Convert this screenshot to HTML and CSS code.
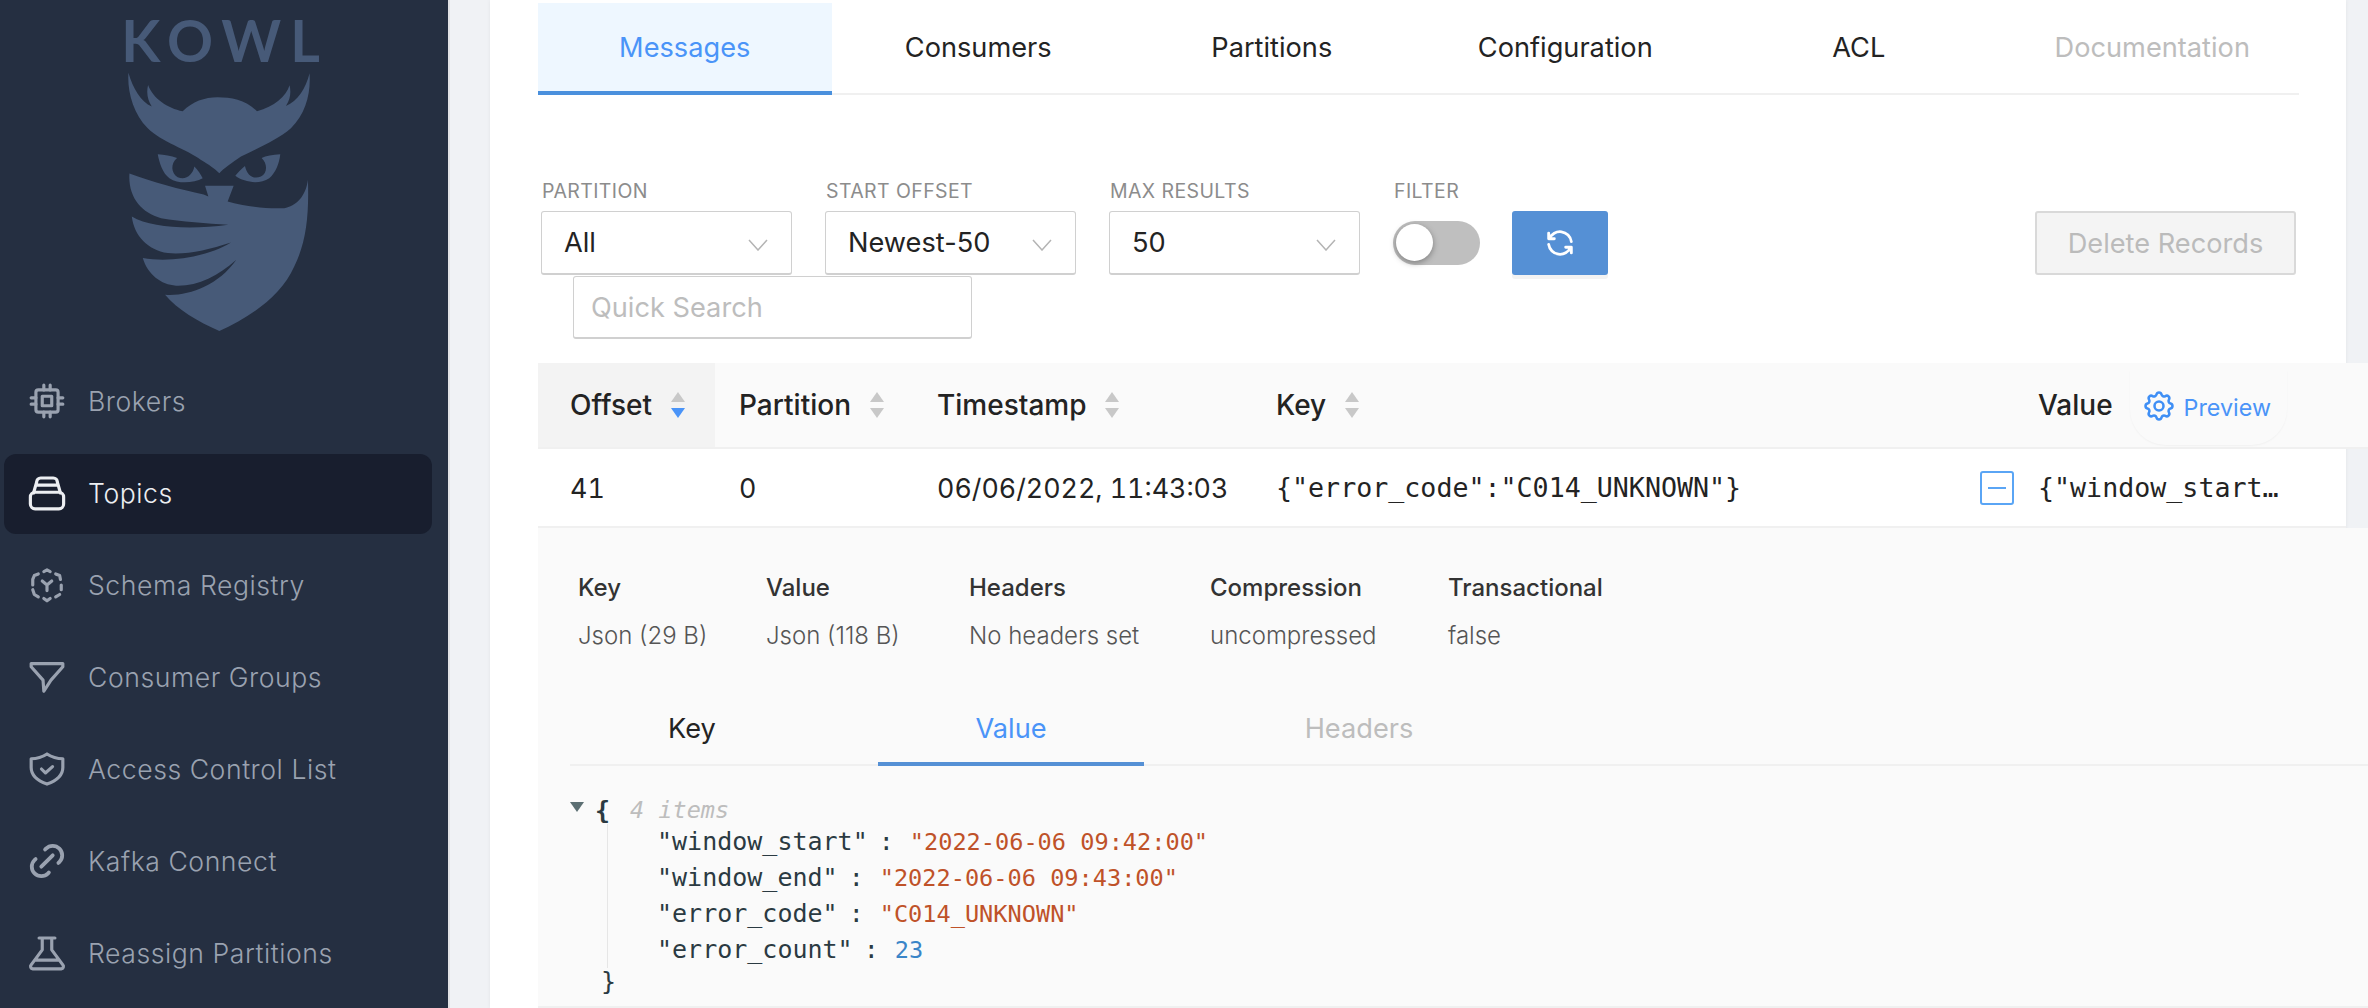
FILE: index.html
```html
<!DOCTYPE html>
<html>
  <head>
    <meta charset="utf-8">
    <title>Kowl</title>
    <link rel="stylesheet" href="styles.css">
  </head>
  <body>
    <aside class="sidebar">
      <div class="logo">
        <span class="logoText">KOWL</span>
        <svg class="logoOwl" viewBox="360 210 600 790">
          <path d="M382 218C378 270 395 340 440 385C480 425 560 450 600 480C625 495 640 505 655 520C670 505 690 490 720 470C770 445 830 420 870 385C915 340 930 280 926 220C915 265 890 305 855 318C870 295 870 275 866 256C855 290 820 320 768 334C735 300 690 292 650 292C610 292 575 305 545 334C500 325 455 295 441 255C435 280 440 300 452 320C420 305 395 265 382 218Z"/>
          <path d="M470 463C490 464 510 468 528 474C508 490 510 520 530 532C555 542 575 525 580 500C590 510 600 525 605 535C580 548 535 555 505 535C485 520 475 490 470 463Z"/>
          <path d="M838 463C815 464 795 468 782 474C800 490 800 520 780 530C755 540 738 525 732 498C720 508 710 518 703 528C730 548 775 555 805 535C825 518 835 490 838 463Z"/>
          <path d="M385 521C450 545 540 570 608 584L622 590L612 558L698 558L680 605C730 620 800 628 850 625C885 620 915 590 921 540C925 650 915 730 880 800C840 890 750 950 655 994C590 965 530 930 492 885C560 890 650 860 706 780C650 830 590 860 525 858C480 855 440 825 425 775C510 790 620 770 690 728C620 750 560 765 500 760C440 750 400 710 392 650C450 685 570 690 682 675C620 670 540 665 480 655C420 640 380 590 385 521Z"/>
        </svg>
      </div>
      <nav class="menu">
        <a class="menuItem">
          <svg class="menuIcon" viewBox="0 0 24 24"><rect x="5" y="5" width="14" height="14" rx="1.5"/><rect x="9" y="9" width="6" height="6"/><path d="M2 10H5M2 14H5M10 2V5M14 2V5M22 10H19M22 14H19M14 22V19M10 22V19"/></svg>
          Brokers
        </a>
        <a class="menuItem active">
          <svg class="menuIcon" viewBox="0 0 24 24"><rect x="1.500" y="11.500" width="21" height="10.500" rx="3"/><path d="M3.500 12L5.500 5A2.500 2.500 0 0 1 8 2.500H16A2.500 2.500 0 0 1 18.500 5L20.500 12M5.500 7H18.500"/></svg>
          Topics
        </a>
        <a class="menuItem">
          <svg class="menuIcon" viewBox="0 0 24 24"><path d="M10 3.500L12 2.500L14 3.500M17.500 5L20 6L20.500 8.500M21 12V15M20 18L17.500 19.500M6.500 19.500L4 18L3 15M3 12V8.500L4 6L6.500 5"/><path d="M9 9.500L12 12L15 9.500M12 12V15.500M10 20.500L12 22L14 20.500"/></svg>
          Schema Registry
        </a>
        <a class="menuItem">
          <svg class="menuIcon" viewBox="0 0 24 24"><path d="M2 3.500H22V5.500L14.500 14L10 21L9.500 14L2 5.500Z"/></svg>
          Consumer Groups
        </a>
        <a class="menuItem">
          <svg class="menuIcon" viewBox="0 0 24 24"><path d="M12 2.500C15 4.500 18 5.500 22 5.500V11C22 16 17.500 19.500 12 21.500C6.500 19.500 2 16 2 11V5.500C6 5.500 9 4.500 12 2.500Z"/><path d="M8.500 12L11 14.500L15.500 10.500"/></svg>
          Access Control List
        </a>
        <a class="menuItem">
          <svg class="menuIcon" viewBox="2 2 20 20"><path d="M9 15L15 9"/><path d="M11 6L11.463 5.464A5 5 0 0 1 18.534 12.536L18 13"/><path d="M13 18L12.603 18.534A5.068 5.068 0 0 1 5.476 18.534A4.972 4.972 0 0 1 5.476 11.463L6 11"/></svg>
          Kafka Connect
        </a>
        <a class="menuItem">
          <svg class="menuIcon" viewBox="0 0 24 24"><path d="M7 2.500H17M9 2.500V10L2 19.500A1.500 1.500 0 0 0 3 22H21A1.500 1.500 0 0 0 22 19.500L15 10V2.500M5.500 16.500H18.500"/></svg>
          Reassign Partitions
        </a>
      </nav>
    </aside>

    <main class="content">
      <section class="card">
        <ul class="tabs">
          <li class="tab active">Messages</li>
          <li class="tab">Consumers</li>
          <li class="tab">Partitions</li>
          <li class="tab">Configuration</li>
          <li class="tab">ACL</li>
          <li class="tab disabled">Documentation</li>
        </ul>

        <div class="filters">
          <div class="filter">
            <label class="filterLabel">PARTITION</label>
            <div class="select">All<svg class="chevron" viewBox="0 0 20 12"><path d="M1 1L10 11L19 1"/></svg></div>
          </div>
          <div class="filter">
            <label class="filterLabel">START OFFSET</label>
            <div class="select">Newest-50<svg class="chevron" viewBox="0 0 20 12"><path d="M1 1L10 11L19 1"/></svg></div>
          </div>
          <div class="filter">
            <label class="filterLabel">MAX RESULTS</label>
            <div class="select">50<svg class="chevron" viewBox="0 0 20 12"><path d="M1 1L10 11L19 1"/></svg></div>
          </div>
          <div class="filter">
            <label class="filterLabel">FILTER</label>
            <div class="toggle"><span class="knob"></span></div>
          </div>
          <button class="refresh">
            <svg viewBox="0 0 24 24"><path d="M20 11A8.100 8.100 0 0 0 4.500 9M4 5V9H8"/><path d="M4 13A8.100 8.100 0 0 0 19.500 15M20 19V15H16"/></svg>
          </button>
          <button class="deleteBtn">Delete Records</button>
        </div>

        <div class="search">Quick Search</div>

        <div class="table">
          <div class="row head">
            <div class="cell colOffset sorted">Offset<span class="sort"><i class="up"></i><i class="down on"></i></span></div>
            <div class="cell colPartition">Partition<span class="sort"><i class="up"></i><i class="down"></i></span></div>
            <div class="cell colTime">Timestamp<span class="sort"><i class="up"></i><i class="down"></i></span></div>
            <div class="cell colKey">Key<span class="sort"><i class="up"></i><i class="down"></i></span></div>
            <div class="cell colValue">Value
              <span class="preview">
                <svg viewBox="0 0 24 24"><path d="M10.325 4.317c.426-1.756 2.924-1.756 3.35 0a1.724 1.724 0 0 0 2.573 1.066c1.543-.94 3.31.826 2.37 2.37a1.724 1.724 0 0 0 1.065 2.572c1.756.426 1.756 2.924 0 3.35a1.724 1.724 0 0 0-1.066 2.573c.94 1.543-.826 3.31-2.37 2.37a1.724 1.724 0 0 0-2.572 1.065c-.426 1.756-2.924 1.756-3.35 0a1.724 1.724 0 0 0-2.573-1.066c-1.543.94-3.31-.826-2.37-2.37a1.724 1.724 0 0 0-1.065-2.572c-1.756-.426-1.756-2.924 0-3.35a1.724 1.724 0 0 0 1.066-2.573c-.94-1.543.826-3.31 2.37-2.37c1 .608 2.296.07 2.572-1.065z"/><circle cx="12" cy="12" r="3"/></svg>
                Preview
              </span>
            </div>
          </div>
          <div class="row body">
            <div class="cell colOffset">41</div>
            <div class="cell colPartition">0</div>
            <div class="cell colTime">06/06/2022, 11:43:03</div>
            <div class="cell colKey mono">{"error_code":"C014_UNKNOWN"}<span class="collapse"></span></div>
            <div class="cell colValue mono">{"window_start…</div>
          </div>
          <div class="expanded">
            <div class="stats">
              <div class="stat statKey"><b>Key</b><span>Json (29 B)</span></div>
              <div class="stat statValue"><b>Value</b><span>Json (118 B)</span></div>
              <div class="stat statHeaders"><b>Headers</b><span>No headers set</span></div>
              <div class="stat statComp"><b>Compression</b><span>uncompressed</span></div>
              <div class="stat"><b>Transactional</b><span>false</span></div>
            </div>
            <div class="innerTabs">
              <div class="innerTab keyTab">Key</div>
              <div class="innerTab valueTab active">Value</div>
              <div class="innerTab headersTab disabled">Headers</div>
            </div>
            <div class="json">
              <div class="jsonOpen"><span class="arrow"></span><span class="brace">{</span><span class="count">4 items</span></div>
              <div class="jsonBody">
                <div class="jsonLine"><span class="jKey">"window_start"</span><span class="jColon">:</span><span class="jStr">"2022-06-06 09:42:00"</span></div>
                <div class="jsonLine"><span class="jKey">"window_end"</span><span class="jColon">:</span><span class="jStr">"2022-06-06 09:43:00"</span></div>
                <div class="jsonLine"><span class="jKey">"error_code"</span><span class="jColon">:</span><span class="jStr">"C014_UNKNOWN"</span></div>
                <div class="jsonLine"><span class="jKey">"error_count"</span><span class="jColon">:</span><span class="jNum">23</span></div>
              </div>
              <div class="jsonClose">}</div>
            </div>
          </div>
        </div>
      </section>
    </main>
  </body>
</html>
```

FILE: styles.css
```css
html, body { margin: 0; height: 1008px; overflow: hidden; }

body {
    display: flex;
    background: #f0f2f5;
    font-family: Inter, "Liberation Sans", sans-serif;
    font-size: 27.200px;
    color: #232323;
}

/* sidebar */
.sidebar {
    flex: none;
    width: 448px;
    background: #252f41;
    border-right: 2px solid #e2e3e6;
}

.logo {
    height: 362px;
    box-sizing: border-box;
    padding-top: 8px;
    display: flex;
    flex-direction: column;
    align-items: center;
}

.logoText {
    font-family: Lato, sans-serif;
    font-weight: 700;
    font-size: 57px;
    line-height: 64px;
    letter-spacing: 9px;
    color: #475a78;
    margin-left: 2px;
}

.logoOwl {
    width: 200px;
    height: 263px;
    margin-top: -2px;
    margin-left: -7px;
    fill: #475a78;
}

.menu {
    display: flex;
    flex-direction: column;
    gap: 12px;
}

.menuItem {
    display: flex;
    align-items: center;
    gap: 22px;
    height: 80px;
    margin-left: 4px;
    width: 428px;
    padding-left: 24px;
    padding-bottom: 2px;
    box-sizing: border-box;
    border-radius: 12px;
    font-size: 26.600px;
    font-weight: 300;
    letter-spacing: .55px;
    color: #9aa2b0;
}

.menuItem.active {
    background: #181e2e;
    color: #eceef2;
}

.menuIcon {
    flex: none;
    width: 38px;
    height: 38px;
    fill: none;
    stroke: currentColor;
    stroke-width: 2;
    stroke-linecap: round;
    stroke-linejoin: round;
}

/* main card */
.content {
    flex: 1;
    padding-left: 40px;
}

.card {
    width: 1856px;
    height: 1008px;
    box-sizing: border-box;
    padding-left: 48px;
    padding-top: 3px;
    background: #fff;
    box-shadow: 0 0 4px rgba(0, 0, 0, .06);
}

.tabs {
    display: flex;
    width: 1761px;
    margin: 0;
    padding: 0;
    list-style: none;
    border-bottom: 2px solid #f0f0f0;
}

.tab {
    flex: 1;
    height: 88px;
    margin-bottom: -2px;
    display: flex;
    align-items: center;
    justify-content: center;
    border-bottom: 4px solid transparent;
}

.tab.active {
    background: #eef7ff;
    color: #4a94f8;
    border-bottom-color: #4a90dd;
}

.tab.disabled { color: #bdbdbd; }

.filters {
    display: flex;
    align-items: flex-end;
    gap: 33px;
    margin: 83px 50px 0 3px;
}

.filter {
    display: flex;
    flex-direction: column;
    gap: 9px;
}

.filterLabel {
    height: 24px;
    line-height: 26px;
    padding-left: 1px;
    font-size: 19.500px;
    letter-spacing: .4px;
    color: #8c8c8c;
}

.select {
    width: 251px;
    height: 64px;
    box-sizing: border-box;
    padding: 0 24px 0 22px;
    display: flex;
    align-items: center;
    justify-content: space-between;
    background: #fff;
    border: 1px solid #d0d0d0;
    border-bottom-width: 2px;
    border-radius: 3px;
}

.chevron {
    width: 20px;
    height: 12px;
    margin-right: -1px;
    margin-top: 4px;
    fill: none;
    stroke: #b4b4b4;
    stroke-width: 1.500;
}

.toggle {
    width: 87px;
    height: 44px;
    margin: 10px 0;
    border-radius: 22px;
    background: #bfbfbf;
}

.knob {
    display: block;
    width: 37px;
    height: 37px;
    margin: 3px 0 0 3px;
    border-radius: 50%;
    background: #fff;
    box-shadow: 0 2px 6px rgba(0, 0, 0, .35);
}

.refresh {
    width: 96px;
    height: 64px;
    margin-left: -1px;
    padding: 0;
    border: 0;
    border-radius: 3px;
    background: #5590d5;
    box-shadow: 0 4px 0 #f3f3f3;
    display: flex;
    align-items: center;
    justify-content: center;
}

.refresh svg {
    width: 34px;
    height: 34px;
    fill: none;
    stroke: #fff;
    stroke-width: 2;
    stroke-linecap: round;
    stroke-linejoin: round;
}

.deleteBtn {
    width: 261px;
    height: 64px;
    margin-left: auto;
    background: #f4f4f4;
    border: 2px solid #d9d9d9;
    border-radius: 3px;
    font-family: inherit;
    font-size: 27.200px;
    color: #bbb;
}

.search {
    width: 399px;
    height: 63px;
    box-sizing: border-box;
    margin: 1px 0 0 35px;
    padding-left: 17px;
    display: flex;
    align-items: center;
    border: 1px solid #d0d0d0;
    border-bottom-width: 2px;
    border-radius: 3px;
    background: #fff;
    color: #bdbdbd;
}

/* table */
.table {
    width: 1830px;
    margin-top: 24px;
}

.row {
    display: flex;
    border-bottom: 2px solid #f0f0f0;
    font-size: 28px;
}

.row.head {
    height: 84px;
    background: #fafafa;
    font-weight: 500;
}

.row.body {
    height: 77px;
    width: 1808px;
    font-size: 26.800px;
    font-variant-numeric: tabular-nums;
}

.cell {
    display: flex;
    align-items: center;
    padding-left: 24px;
    box-sizing: border-box;
}

.colOffset { width: 177px; padding-left: 32px; }
.colPartition { width: 197px; }
.colTime { width: 340px; padding-left: 25px; }
.colKey { width: 762px; justify-content: space-between; }
.colValue { flex: 1; }
.head .colKey { justify-content: flex-start; }
.sorted { background: #f3f3f3; }

.cell.mono {
    font-family: "DejaVu Sans Mono", monospace;
    font-size: 26.650px;
}

.sort {
    display: flex;
    flex-direction: column;
    gap: 6px;
    margin-left: 19px;
}

.sort i {
    display: block;
    width: 0;
    height: 0;
    border-left: 7.500px solid transparent;
    border-right: 7.500px solid transparent;
}

.sort .up { border-bottom: 10px solid #c8c8c8; }
.sort .down { border-top: 10px solid #c8c8c8; }
.sort .down.on { border-top-color: #4a94f8; }

.preview {
    display: flex;
    align-items: center;
    gap: 7px;
    width: 157px;
    height: 75px;
    box-sizing: border-box;
    margin-left: 17px;
    margin-top: 4px;
    padding-left: 15px;
    border-radius: 0 0 36px 36px;
    box-shadow: 0 1px 2px rgba(0, 0, 0, .04);
    font-weight: 400;
    font-size: 23.300px;
    color: #4a94f8;
}

.preview svg {
    width: 36px;
    height: 36px;
    margin-left: -4px;
    margin-top: -2px;
    fill: none;
    stroke: #3f8ff5;
    stroke-width: 1.700;
}

.collapse {
    position: relative;
    width: 34px;
    height: 34px;
    box-sizing: border-box;
    border: 2px solid #5aa5f5;
    border-radius: 3px;
}

.collapse::after {
    content: "";
    position: absolute;
    left: 6px;
    right: 6px;
    top: 14px;
    height: 2px;
    background: #5aa5f5;
}

/* expanded row */
.expanded {
    height: 480px;
    box-sizing: border-box;
    background: #fafafa;
    border-bottom: 2px solid #f0f0f0;
    padding-top: 46px;
}

.stats {
    display: flex;
    padding-left: 40px;
}

.stat {
    display: flex;
    flex-direction: column;
    gap: 21px;
    font-size: 24px;
    line-height: 27px;
}

.stat b { font-weight: 500; color: #333; }
.stat span { font-weight: 300; color: #555; }
.statKey { width: 188px; }
.statValue { width: 203px; }
.statHeaders { width: 241px; }
.statComp { width: 238px; }

.innerTabs {
    display: flex;
    margin: 45px 0 0 32px;
    border-bottom: 2px solid #f0f0f0;
}

.innerTab {
    height: 72px;
    margin-bottom: -2px;
    box-sizing: border-box;
    display: flex;
    align-items: center;
    justify-content: center;
    border-bottom: 4px solid transparent;
}

.keyTab { width: 244px; margin-right: 64px; }
.valueTab { width: 266px; margin-right: 82px; }
.headersTab { width: 266px; }
.innerTab.active { color: #4a94f8; border-bottom-color: #5590d5; }
.innerTab.disabled { color: #bdbdbd; }

.json {
    margin: 28px 0 0 32px;
    font-family: "DejaVu Sans Mono", monospace;
    font-size: 25px;
    color: #2b3a42;
}

.jsonOpen {
    display: flex;
    align-items: center;
    height: 32px;
    margin-bottom: -2px;
}

.arrow {
    width: 0;
    height: 0;
    margin-top: -6px;
    border-left: 7px solid transparent;
    border-right: 7px solid transparent;
    border-top: 10px solid #5c6f73;
}

.brace { margin-left: 11px; font-weight: 700; }

.count {
    margin-left: 20px;
    font-style: italic;
    font-size: 23.500px;
    color: #bdbdbd;
}

.jsonBody {
    margin-left: 37px;
    padding-left: 49px;
    border-left: 1px solid #e6e6e6;
}

.jsonLine { height: 36px; line-height: 36px; white-space: pre; }
.jColon { margin: 0 16px 0 11px; }
.jStr { color: #bf5229; font-size: 23.600px; }
.jNum { color: #3a85c8; font-size: 23.600px; }
.jKey { color: #2b3a42; }

.jsonClose { margin-left: 31px; line-height: 28px; }
```
